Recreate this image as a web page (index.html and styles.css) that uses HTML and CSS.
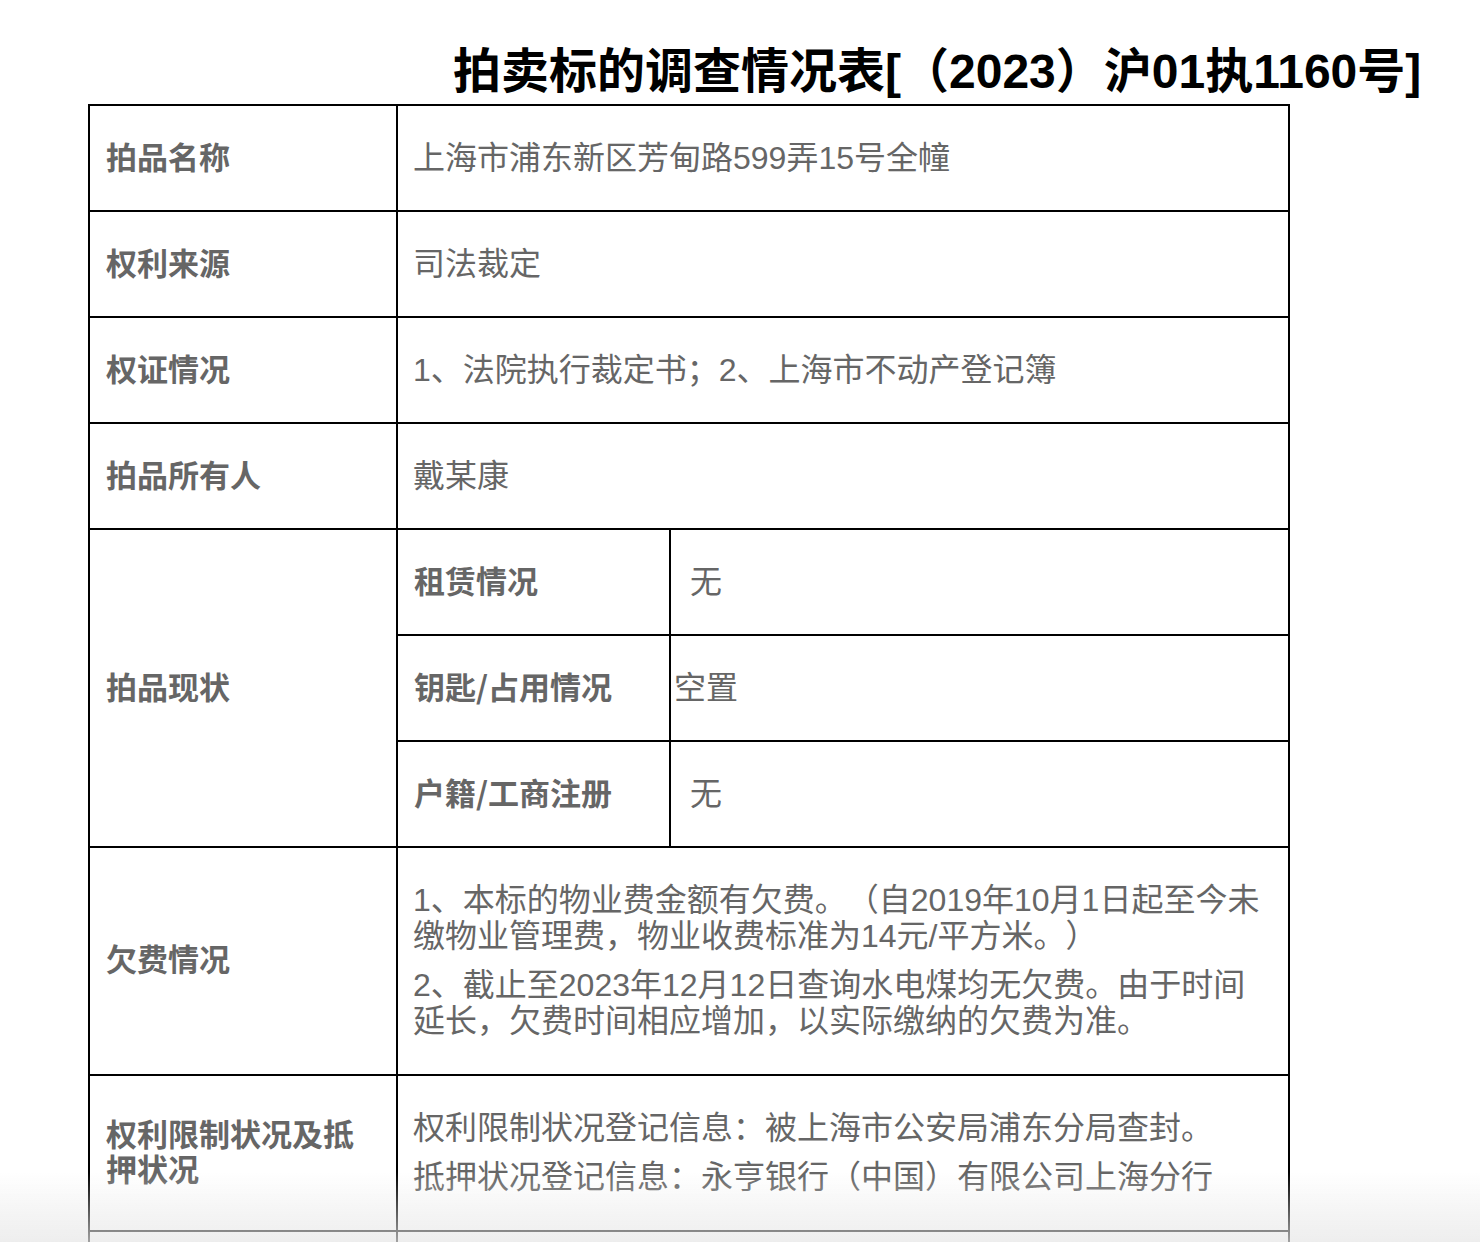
FILE: index.html
```html
<!DOCTYPE html>
<html lang="zh-CN">
<head>
<meta charset="utf-8">
<title>拍卖标的调查情况表</title>
<link rel="stylesheet" href="styles.css">
</head>
<body>
<h1 class="title">拍卖标的调查情况表[（2023）沪01执1160号]</h1>
<table class="survey">
  <colgroup>
    <col class="c1"><col class="c2"><col class="c3">
  </colgroup>
  <tr>
    <td class="label">拍品名称</td>
    <td class="value" colspan="2">上海市浦东新区芳甸路599弄15号全幢</td>
  </tr>
  <tr>
    <td class="label">权利来源</td>
    <td class="value" colspan="2">司法裁定</td>
  </tr>
  <tr>
    <td class="label">权证情况</td>
    <td class="value" colspan="2">1、法院执行裁定书；2、上海市不动产登记簿</td>
  </tr>
  <tr>
    <td class="label">拍品所有人</td>
    <td class="value" colspan="2">戴某康</td>
  </tr>
  <tr>
    <td class="label" rowspan="3">拍品现状</td>
    <td class="label">租赁情况</td>
    <td class="value sub">无</td>
  </tr>
  <tr>
    <td class="label">钥匙/占用情况</td>
    <td class="value tight">空置</td>
  </tr>
  <tr>
    <td class="label">户籍/工商注册</td>
    <td class="value sub">无</td>
  </tr>
  <tr class="tall">
    <td class="label">欠费情况</td>
    <td class="value" colspan="2">
      <p>1、本标的物业费金额有欠费。（自2019年10月1日起至今未缴物业管理费，物业收费标准为14元/平方米。）</p>
      <p>2、截止至2023年12月12日查询水电煤均无欠费。由于时间延长，欠费时间相应增加，以实际缴纳的欠费为准。</p>
    </td>
  </tr>
  <tr class="tall">
    <td class="label">权利限制状况及抵押状况</td>
    <td class="value" colspan="2">
      <p>权利限制状况登记信息：被上海市公安局浦东分局查封。</p>
      <p>抵押状况登记信息：永亨银行（中国）有限公司上海分行</p>
    </td>
  </tr>
  <tr>
    <td class="label">标的物介绍</td>
    <td class="value" colspan="2">详见附件</td>
  </tr>
</table>
<div class="fade"></div>
</body>
</html>
```

FILE: styles.css
```css
html, body {
  background: #fff;
}
body {
  margin: 8px;
  font-family: "Liberation Sans", "Noto Sans CJK SC", sans-serif;
  text-spacing-trim: space-all;
}
.title {
  margin: 0;
  padding: 36px 0 0 445px;
  height: 60px;
  font-size: 48px;
  line-height: 56px;
  font-weight: bold;
  color: #000;
  white-space: nowrap;
  text-spacing-trim: space-all;
}
.survey {
  margin-left: 80px;
  width: 1202px;
  border-collapse: collapse;
  table-layout: fixed;
  font-size: 32px;
  color: #666;
}
.c1 { width: 308px; }
.c2 { width: 273px; }
.survey td {
  border: 2px solid #000;
  height: 104px;
  padding: 0 12px 0 16px;
  vertical-align: middle;
  line-height: 36px;
  text-spacing-trim: space-all;
}
.survey td.label {
  font-family: "Noto Sans CJK SC", "Liberation Sans", sans-serif;
  font-weight: bold;
  font-size: 31px;
  line-height: 35px;
  padding-bottom: 5px;
  height: 99px;
}
.survey td.value {
  padding-left: 15px;
}
.survey td.sub {
  padding-left: 19px;
}
.survey td.tight {
  padding-left: 3px;
}
.survey tr.tall td {
  height: auto;
  padding-top: 34px;
  padding-bottom: 35px;
}
.survey tr.tall td.label {
  padding-top: 31px;
  padding-bottom: 38px;
}
.survey p {
  margin: 0;
}
.survey p + p {
  margin-top: 13px;
}
.fade {
  position: fixed;
  left: 0;
  right: 0;
  bottom: 0;
  height: 70px;
  pointer-events: none;
  background: linear-gradient(to bottom, rgba(230, 230, 230, 0), rgba(230, 230, 230, 0.7));
}
```
